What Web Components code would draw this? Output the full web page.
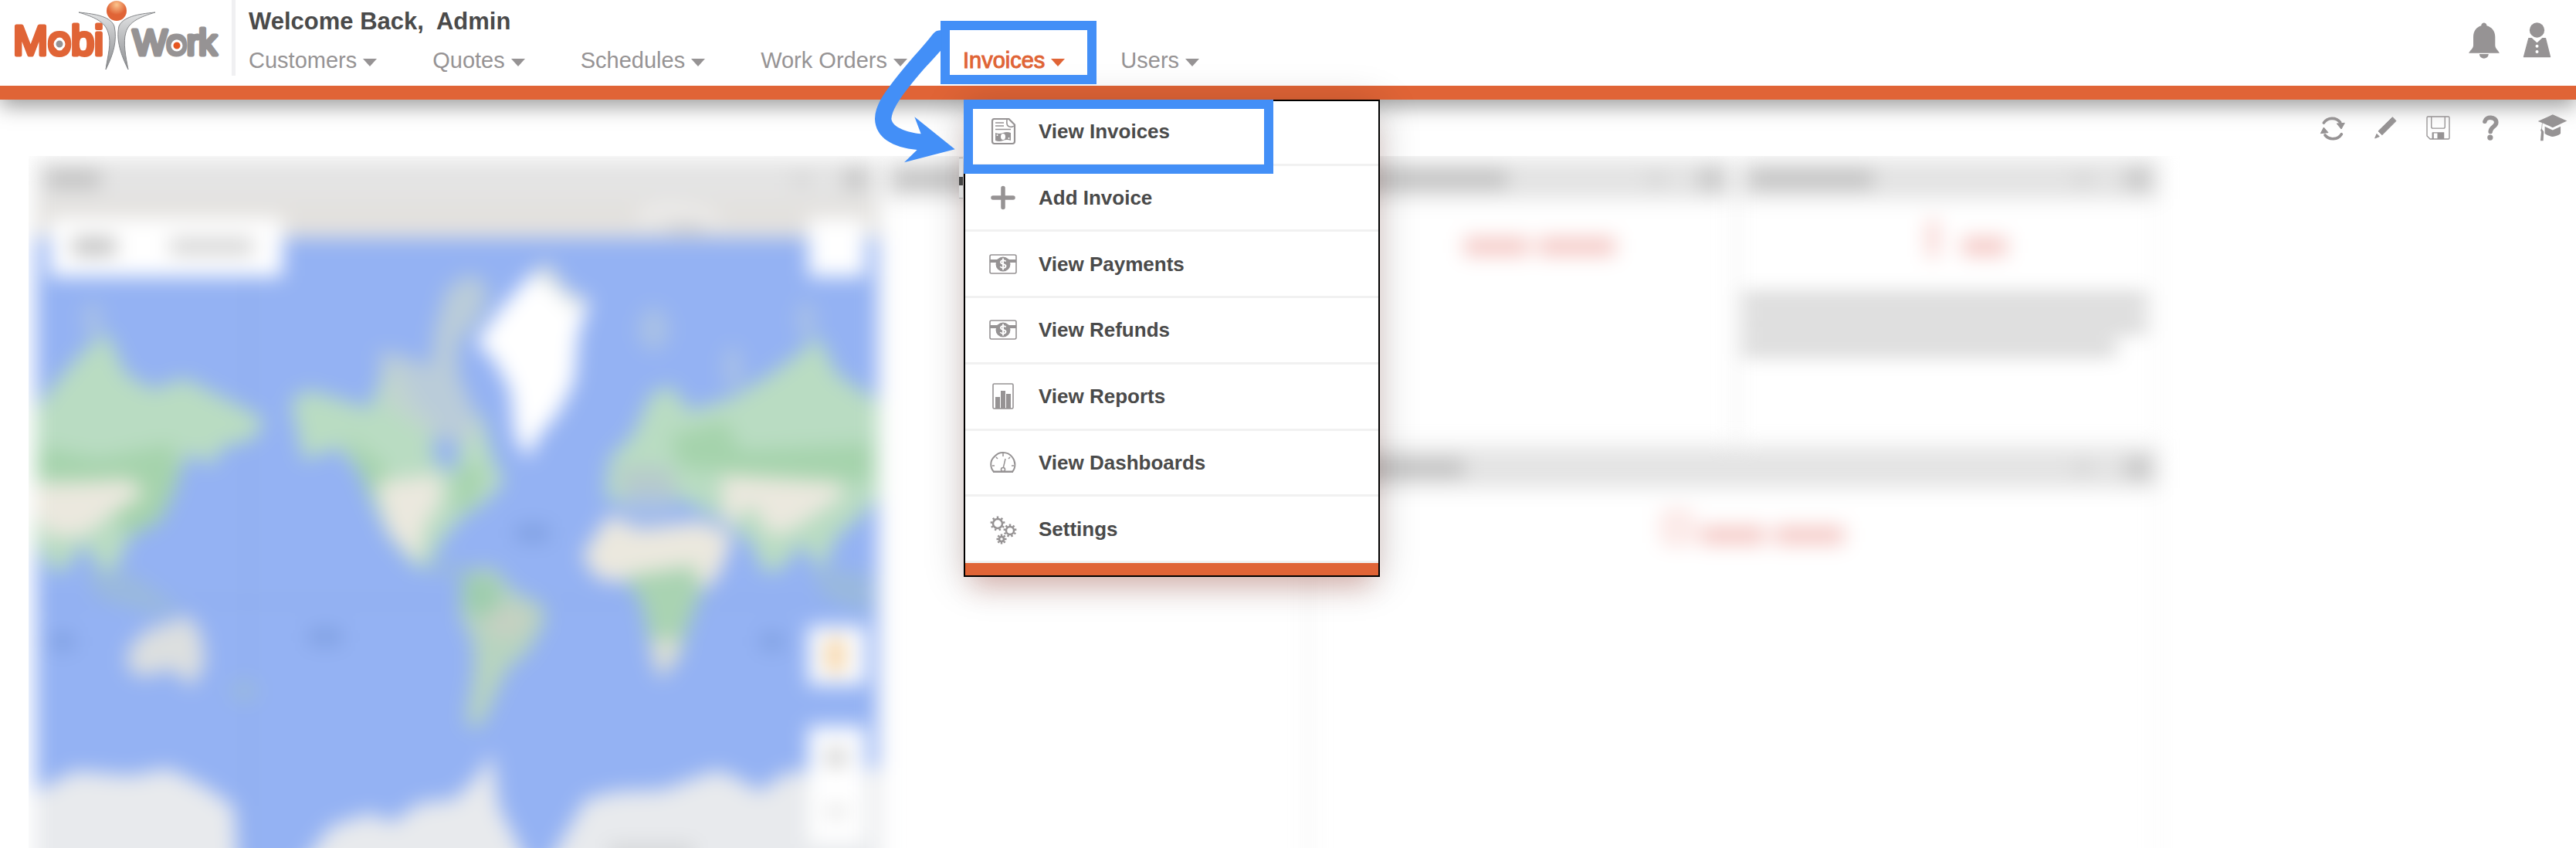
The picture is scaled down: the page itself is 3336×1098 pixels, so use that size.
<!DOCTYPE html>
<html lang="en">
<head>
<meta charset="utf-8">
<title>MobiWork</title>
<style>
    html, body {
        margin: 0;
        height: 100%;
    }
    body {
        font-family: "Liberation Sans", Arial, sans-serif;
        color: #4a4a4a;
        background: #fff;
        --orange: #e06436;
        --gray: #969394;
        --blue: #438ff7;
    }
</style>
</head>
<body>
<mw-app></mw-app>

<script>
// base: clones a template made of style + html into the shadow root
class MwElement extends HTMLElement {
    constructor() {
        super();
        this.attachShadow({ mode: "open" });
    }

    getStyle() {
        return "";
    }

    getTemplate() {
        return "<slot></slot>";
    }

    render() {
        const template = document.createElement("template");
        template.innerHTML = `<style>${this.getStyle()}</style>${this.getTemplate()}`;
        this.shadowRoot.replaceChildren(template.content.cloneNode(true));
    }

    connectedCallback() {
        this.render();
    }
}

// one gear: ring + teeth
function gear(cx, cy, r, teeth) {
    let out = `<circle cx="${cx}" cy="${cy}" r="${r}" fill="none" stroke-width="2.500"/>`;
    for (let i = 0; i < teeth; i++) {
        const a = (360 / teeth) * i;
        out += `<path transform="rotate(${a} ${cx} ${cy})" stroke-width="2.500" d="M${cx} ${cy - r - 1}v-2.500"/>`;
    }
    return out;
}

const MONEY = `<rect x="3" y="8" width="34" height="24" rx="2" fill="none" stroke-width="1.6"/>
    <path stroke="none" d="M3 14h34v4H3z"/><circle cx="20" cy="20" r="9.5" stroke="none"/>
    <path d="M23.5 16.5c-1-2-6.500-2-6.500 1s6.500 2 6.500 5-6 3-7 .5M20 12.500v15" fill="none" stroke="#fff" stroke-width="1.9"/>`;

// name: [viewBox, width, height, shapes]
const ICONS = {
    bell: ["650 28 121 143", 40, 47, `<path stroke="none" d="M699 41C681 46 668 62 668 85V118C668 132 655 138 650 149H771C766 138 754 132 754 118V85C754 62 740 46 721 41C720 26 700 26 699 41ZM692 153H728C727 176 693 176 692 153Z"/>`],
    person: ["860 30 110 138", 37, 46, `<circle cx="915" cy="60" r="29" stroke="none"/><path stroke-width="4" stroke-linejoin="round" d="M883 92H894L915 112L936 92H948L966 164H864Z"/><g fill="#fff" stroke="none"><circle cx="915" cy="122" r="6"/><circle cx="915" cy="144" r="6"/></g>`],
    refresh: ["72 384 102 102", 34, 34, `<g fill="none" stroke-width="11" stroke-linecap="round"><path d="M88 414A40 40 0 0 1 152 412"/><path d="M157 458A40 40 0 0 1 93 462"/></g><path stroke-width="3" stroke-linejoin="round" d="M139 417L169 415L156 438ZM76 455L88 432L105 452Z"/>`],
    pencil: ["281 388 92 94", 31, 31, `<path stroke-width="3" stroke-linejoin="round" d="M354 393L368 408L313 463L298 448ZM292 459L302 469L285 476Z"/>`],
    save: ["485 388 92 92", 31, 31, `<g fill="none" stroke-width="4"><path d="M488 395q0-4 4-4H570q4 0 4 4V473q0 4-4 4H500L488 465Z"/><path d="M505 391V430q0 6 6 6H551q6 0 6-6V391"/><path d="M510 477V453H552V477"/></g><path stroke="none" d="M528 453H552V477H528Z"/><path stroke="none" d="M508 453h6v24h-6z"/>`],
    help: ["704 384 68 100", 23, 33, `<path fill="none" stroke-width="17" stroke-linecap="round" d="M715 409C719 388 760 389 760 413C760 430 737 430 737 449"/><circle cx="736" cy="472" r="11" stroke="none"/>`],
    school: ["918 382 118 106", 39, 35, `<path stroke="none" d="M978 383L1034 408L978 434L938 416L936 440L943 450L941 486H930L933 450Q928 444 934 438L936 415L920 409Z"/><path stroke="none" d="M947 430L978 444L1009 430V458Q978 481 947 458Z"/>`],
    invoice: ["0 0 40 40", 40, 40, `<path fill="none" stroke-width="2.200" stroke-linejoin="round" d="M8.500 4h19l7.500 7.500V33q0 3-3 3H9q-3 0-3-3V7q0-3 2.500-3z"/><path fill="none" stroke-width="1.600" d="M25 5q-1 8 3 9t6-1M10 9h11M10 13h11M10 17.500h20"/><path stroke="none" d="M10 22q5 2 10 0t10 0v10q-5-2-10 0t-10 0z"/><ellipse cx="20" cy="27" rx="3" ry="4" fill="#fff" stroke="none"/><g fill="#fff" stroke="none"><circle cx="12.500" cy="25" r="1"/><circle cx="27.500" cy="29" r="1"/></g>`],
    plus: ["0 0 40 40", 40, 40, `<path fill="none" stroke-width="5.500" stroke-linecap="round" d="M20 7.500v25M7 20h26"/>`],
    money: ["0 0 40 40", 40, 40, MONEY],
    chart: ["0 0 40 40", 40, 40, `<rect x="7" y="4" width="26" height="32" rx="1.500" fill="none" stroke-width="1.600"/><path stroke="none" d="M10 21h6v15h-6zM17 13h6v23h-6zM24 17h6v19h-6z"/>`],
    gauge: ["0 0 40 40", 40, 40, `<path fill="none" stroke-width="2" stroke-linejoin="round" d="M8 32C3 26 3 18 8 13S15 7 20 7s8 1 12 6 5 13 0 19z"/><path fill="none" stroke-width="1.500" d="M20 8v4M11 13l2 2M29 13l-2 2M6 24h3M34 24h-3M23 15l-3 13"/><circle cx="20" cy="29" r="2.500" fill="#fff" stroke-width="1.600"/><path stroke="none" d="M7 30.500h26v2.500H7z"/>`],
    gears: ["0 0 40 40", 40, 40, gear(13, 13, 6, 9) + gear(29, 22, 5, 9) + gear(18, 33, 3, 8)]
};

class MwIcon extends MwElement {
    getStyle() {
        return `
        :host { display: block; }
        svg { display: block; fill: var(--gray); stroke: var(--gray); }
        `;
    }

    getTemplate() {
        const [box, w, h, shapes] = ICONS[this.getAttribute("name")];
        return `<svg viewBox="${box}" width="${w}" height="${h}" aria-hidden="true">${shapes}</svg>`;
    }
}

class MwLogo extends MwElement {
    getStyle() {
        return `
        :host { display: block; }
        svg { display: block; }
        text { font-family: "Liberation Sans", Arial, sans-serif; stroke-width: 5px; stroke-linejoin: round; stroke-linecap: round; }
        `;
    }

    getTemplate() {
        return `
        <svg width="300" height="98" viewBox="0 0 300 98" role="img" aria-label="MobiWork">
            <defs>
                <linearGradient id="arm" x1="0" y1="0" x2="0" y2="1">
                    <stop offset="0" stop-color="#e2e3e4"/><stop offset="1" stop-color="#8a8c8f"/>
                </linearGradient>
                <radialGradient id="head" cx="0.5" cy="0.2" r="0.5">
                    <stop offset="0" stop-color="#fbc58e"/><stop offset="1" stop-color="#e06436"/>
                </radialGradient>
            </defs>
            <text x="17" y="71" font-size="54" fill="#e06436" stroke="#e06436">Mobi</text>
            <text x="172" y="71" font-size="47" fill="#969394" stroke="#969394">Work</text>
            <circle cx="77" cy="57" r="6" fill="#969394" stroke="#fff" stroke-width="3"/>
            <circle cx="229" cy="59" r="6" fill="#e6551f" stroke="#fff" stroke-width="3"/>
            <g fill="url(#arm)" stroke="#85878a" stroke-width="1">
                <path d="M102 16C125 18 144 22 148 34C152 52 147 70 137 90C139 74 145 55 140 42C136 28 122 22 102 16Z"/>
                <path d="M201 16C178 18 159 22 154 34C150 52 157 72 166 90C163 74 159 55 163 42C167 28 181 22 201 16Z"/>
            </g>
            <circle cx="151" cy="14" r="13" fill="url(#head)"/>
        </svg>`;
    }
}

class MwHeader extends MwElement {
    getStyle() {
        return `
        :host {
            display: flex;
            position: relative;
            z-index: 2;
            height: 111px;
            background: #fff;
            border-bottom: 18px solid var(--orange);
            box-shadow: 0 8px 26px rgba(0, 0, 0, 0.4);
        }
        .rule { width: 5px; height: 98px; background: #f0f0f2; }
        .main { flex: 1; padding: 10px 0 0 17px; }
        h1 { margin: 0 0 16px; font-size: 31px; line-height: 36px; white-space: pre; }
        nav { display: flex; gap: 72px; }
        .tools { display: flex; gap: 28px; padding: 29px 31px 0 0; }
        button {
            display: flex;
            justify-content: center;
            width: 40px;
            height: 48px;
            padding: 0;
            border: 0;
            background: none;
        }
        `;
    }

    getTemplate() {
        return `
        <mw-logo></mw-logo>
        <div class="rule"></div>
        <div class="main">
            <h1>Welcome Back,  Admin</h1>
            <nav><slot></slot></nav>
        </div>
        <div class="tools">
            <button aria-label="Notifications"><mw-icon name="bell"></mw-icon></button>
            <button aria-label="Profile"><mw-icon name="person"></mw-icon></button>
        </div>`;
    }
}

class MwNavItem extends MwElement {
    getStyle() {
        return `
        :host { display: block; position: relative; color: var(--gray); }
        :host([active]) { color: var(--orange); }
        :host([active]) button { -webkit-text-stroke: 1px var(--orange); }
        button {
            display: flex;
            align-items: center;
            gap: 8px;
            padding: 0;
            border: 0;
            background: none;
            color: inherit;
            font: inherit;
            font-size: 29px;
            line-height: 33px;
            white-space: nowrap;
        }
        svg { display: block; margin-top: 4px; fill: currentColor; }
        `;
    }

    getTemplate() {
        return `
        <button aria-haspopup="true">${this.getAttribute("label")}
            <svg width="18" height="10" viewBox="0 0 18 10" aria-hidden="true"><path d="M0 0h18L9 10z"/></svg>
        </button>
        <slot></slot>`;
    }
}

class MwMenu extends MwElement {
    getStyle() {
        return `
        :host {
            display: block;
            position: absolute;
            top: 67px;
            left: 1px;
            width: 539px;
            background: #fff;
            border-bottom: 18px solid var(--orange);
            box-shadow: 0 24px 32px -12px rgba(200, 60, 40, 0.25), 0 6px 50px rgba(0, 0, 0, 0.2);
        }
        .list { display: grid; grid-auto-rows: 1fr; height: 600px; }
        .frame {
            position: absolute;
            inset: 0 0 -18px;
            border: 2px solid #000;
            pointer-events: none;
        }
        .sliver {
            position: absolute;
            top: 75px;
            left: -6px;
            width: 5px;
            height: 51px;
            background: linear-gradient(#dcdcdc 24px, #444 24px, #444 35px, #dcdcdc 35px);
            border-top: 1px solid #aaa;
            border-bottom: 1px solid #aaa;
        }
        `;
    }

    getTemplate() {
        return `<div class="sliver"></div><div class="frame"></div><div class="list"><slot></slot></div>`;
    }
}

class MwMenuItem extends MwElement {
    getStyle() {
        return `
        :host { display: grid; margin: 0 2px; border-bottom: 3px solid #f1f1f1; }
        a {
            display: flex;
            align-items: center;
            gap: 26px;
            padding-left: 29px;
            color: #4a4a4a;
            font-size: 26px;
            font-weight: bold;
            line-height: 30px;
            text-decoration: none;
        }
        `;
    }

    getTemplate() {
        return `
        <a href="#"><mw-icon name="${this.getAttribute("icon")}"></mw-icon>${this.getAttribute("label")}</a>
        <slot></slot>`;
    }
}

// blue frame drawn over a nav or menu entry
class MwCallout extends MwElement {
    getStyle() {
        return `
        :host {
            display: block;
            position: absolute;
            z-index: 1;
            box-sizing: border-box;
            border: 12px solid var(--blue);
            pointer-events: none;
        }
        :host([kind="tab"]) { top: -35px; left: -29px; width: 202px; height: 82px; }
        :host([kind="row"]) { top: 0; left: 0; width: 401px; height: 96px; }
        svg { position: absolute; top: -1px; left: -99px; fill: var(--blue); }
        `;
    }

    getTemplate() {
        if (this.getAttribute("kind") !== "tab") {
            return "";
        }
        return `
        <svg width="108" height="174" viewBox="90 84 324 522" aria-hidden="true">
            <path d="M356 88C338 88 330 92 321 103C280 155 220 218 170 283C130 335 97 380 96 432C98 505 165 543 260 552L210 601L407 550L250 424L275 490C220 484 165 465 160 432C162 398 190 355 240 293C280 243 315 208 356 162Z"/>
        </svg>`;
    }
}

class MwToolbar extends MwElement {
    getStyle() {
        return `
        :host {
            display: flex;
            justify-content: flex-end;
            align-items: center;
            gap: 28px;
            height: 73px;
            padding-right: 11px;
            position: relative;
            z-index: 3;
            pointer-events: none;
        }
        button {
            display: flex;
            justify-content: center;
            align-items: center;
            width: 40px;
            height: 40px;
            padding: 0;
            border: 0;
            background: none;
            pointer-events: auto;
        }
        button:last-child { margin-left: 12px; }
        `;
    }

    getTemplate() {
        return `
        <button aria-label="Refresh"><mw-icon name="refresh"></mw-icon></button>
        <button aria-label="Edit"><mw-icon name="pencil"></mw-icon></button>
        <button aria-label="Save"><mw-icon name="save"></mw-icon></button>
        <button aria-label="Help"><mw-icon name="help"></mw-icon></button>
        <button aria-label="Training"><mw-icon name="school"></mw-icon></button>`;
    }
}

// dashboard widget: gray bar with a title smudge and two window buttons
class MwPanel extends MwElement {
    getStyle() {
        return `
        :host { display: flex; flex-direction: column; background: #fff; }
        header {
            display: flex;
            align-items: center;
            gap: 44px;
            height: 52px;
            padding: 0 14px;
            background: #e4e4e4;
        }
        .title { height: 20px; margin-right: auto; background: #bcbcbc; }
        .min { width: 22px; height: 12px; background: #cfcfcf; }
        .close { width: 30px; height: 26px; background: #c4c4c4; }
        .body { flex: 1; border: solid #f3f3f3; border-width: 0 4px 4px; }
        :host([flush]) .body { border: 0; }
        `;
    }

    getTemplate() {
        return `
        <header>
            <div class="title" style="width: ${this.getAttribute("title-width")}px"></div>
            <div class="min"></div>
            <div class="close"></div>
        </header>
        <div class="body"><slot></slot></div>`;
    }
}

class MwMap extends MwElement {
    getStyle() {
        return `
        :host { display: block; }
        svg { display: block; width: 100%; }
        `;
    }

    getTemplate() {
        return `
        <svg viewBox="48 254 1090 870" preserveAspectRatio="xMidYMin slice" aria-hidden="true">
            <rect x="48" y="254" width="1090" height="870" fill="#94b2f3"/>
            <rect x="48" y="254" width="1090" height="50" fill="#e3e1de"/>
            <path d="M323 306V1124M48 775H1138" stroke="#8dabe9" stroke-width="4"/>
            <g fill="#b9dcc2">
                <path d="M48 525L75 490L110 450L140 425L165 480L200 500L240 485L280 505L320 525L345 540L330 565L290 575L275 600L250 582L237 600L225 640L200 675L170 690L150 735L135 735L110 700L85 735L70 735L48 700Z"/>
                <path d="M378 515L400 500L450 515L480 525L500 470L520 480L540 520L565 545L562 590L590 610L600 555L625 530L640 590L655 620L625 650L600 665L570 700L555 735L535 725L505 690L485 650L470 610L440 575L395 592Z"/>
                <path d="M785 640L790 590L820 560L845 505L870 495L895 528L950 510L1000 480L1040 450L1060 430L1085 480L1138 515V640L1110 670L1085 690L1065 735L1040 700L1010 735L990 735L975 700L940 670L880 640L830 650Z"/>
            </g>
            <g fill="#a5d3ac">
                <path d="M55 575L130 590L225 570L235 610L210 670L170 690L110 620L50 615Z"/>
                <path d="M450 560L500 600L510 640L480 640L465 600Z"/>
                <path d="M870 560L940 540L960 580L1130 570V620L950 610L880 600Z"/>
                <path d="M595 600L630 600L615 650L590 660Z"/>
            </g>
            <g fill="#ebe8de">
                <path d="M48 622L170 616L190 635L150 660L110 690L65 690L48 660Z"/>
                <path d="M488 620L570 610L575 640L550 680L545 725L505 685Z"/>
                <path d="M935 610L1090 620L1090 640L1030 680L1000 690L975 650L940 680Z"/>
                <path d="M755 715L790 662L830 680L910 670L950 690L935 735L915 760L890 745L815 750L775 745Z"/>
                <path d="M838 800L880 800L885 840L858 875L848 855Z"/>
                <path d="M167 838L190 812L225 800L245 792L262 815L268 855L250 885L225 862L185 872L168 862Z" fill="#dcdfdf"/>
            </g>
            <path d="M810 742L900 728L910 760L895 800L880 845L845 835L832 775Z" fill="#a9d3b2"/>
            <path d="M842 825L882 820L878 850L858 872L848 855Z" fill="#dcdfd4"/>
            <path d="M800 600L870 600L880 640L860 640L810 640Z" fill="#b7cbcb"/>
            <path d="M600 735L640 730L665 760L705 780L707 800L685 840L660 860L645 890L630 925L620 940L605 930L615 870L615 830L598 790Z" fill="#b7d4bf"/>
            <path d="M600 740L645 745L650 780L630 795L603 785Z" fill="#9dcdad"/>
            <path d="M640 780L690 785L685 810L650 825L628 805Z" fill="#c6d0c2"/>
            <path d="M560 470L565 420L580 370L610 350L635 368L625 405L595 440L595 480L630 560L600 570L560 560L500 520L492 450L520 455Z" fill="#c3d2d2" opacity="0.8"/>
            <path d="M618 440L650 395L690 350L710 335L735 370L765 385L750 430L745 490L725 530L700 560L685 590L668 560L662 500L640 460Z" fill="#fff"/>
            <path d="M690 350L710 335L735 370L760 385L750 400L720 370Z" fill="#d8dfdf"/>
            <g fill="#a9c1e5">
                <ellipse cx="848" cy="422" rx="20" ry="28"/>
                <ellipse cx="950" cy="472" rx="12" ry="28"/>
                <ellipse cx="122" cy="410" rx="12" ry="24"/>
                <ellipse cx="1045" cy="410" rx="12" ry="24"/>
                <ellipse cx="840" cy="650" rx="40" ry="14"/>
            </g>
            <g fill="#9ab9dd">
                <path d="M110 730L175 740L240 785L200 790L130 770ZM1050 730L1130 740V790L1070 770ZM550 720L620 730L600 745L560 735Z"/>
                <ellipse cx="318" cy="890" rx="18" ry="14"/>
            </g>
            <g fill="#7e9ee0">
                <rect x="670" y="676" width="42" height="20"/>
                <rect x="402" y="810" width="42" height="20"/>
                <rect x="68" y="816" width="30" height="20"/>
                <rect x="986" y="816" width="30" height="20"/>
            </g>
            <g fill="#e8eaed">
                <path d="M48 1020L100 993L170 1000L220 990L270 1015L305 1040L310 1124H48Z"/>
                <path d="M385 1124L430 1065L480 1048L510 1060L545 1035L590 1030L620 1000L638 970L648 1040L690 1124Z"/>
                <path d="M705 1124L760 1030L800 1020L860 1018L930 992L960 1005L985 1020L1020 995L1138 990V1124Z"/>
            </g>
            <rect x="790" y="1090" width="110" height="20" fill="#d2d4d6"/>
            <path d="M830 282Q840 266 880 270T930 282" fill="none" stroke="#f6f6f6" stroke-width="10"/>
            <rect x="870" y="286" width="44" height="12" fill="#ccc"/>
            <g fill="#fff">
                <rect x="66" y="278" width="302" height="76"/>
                <rect x="1048" y="278" width="74" height="76"/>
                <rect x="1048" y="806" width="74" height="76"/>
                <rect x="1048" y="936" width="74" height="152"/>
            </g>
            <g fill="#bdbdbd">
                <rect x="96" y="304" width="56" height="22"/>
                <rect x="222" y="304" width="108" height="22" fill="#d4d4d4"/>
                <rect x="1072" y="964" width="24" height="24" fill="#ccc"/>
                <rect x="1072" y="1040" width="24" height="12" fill="#d8d8d8"/>
            </g>
            <rect x="1072" y="822" width="22" height="44" fill="#f3cf9c"/>
        </svg>`;
    }
}

class MwDashboard extends MwElement {
    getStyle() {
        return `
        :host { display: block; flex: 1; min-height: 0; margin: 0 37px; overflow: hidden; }
        .board {
            display: grid;
            grid-template-columns: 1092fr 546fr 546fr 546fr 494fr;
            grid-template-rows: 370px 560px;
            gap: 4px 8px;
            padding: 4px 0 0 9px;
            filter: blur(13px);
        }
        .map, .side { grid-row: span 2; }
        .wide { grid-column: 3 / span 2; }
        .note { display: flex; justify-content: center; align-items: center; gap: 12px; height: 122px; padding-left: 46px; }
        .note i { height: 22px; background: #f4c4c0; }
        .note .mark { width: 12px; height: 48px; margin: 0 20px 20px 0; background: #f6c6c2; }
        .note .box { width: 20px; height: 24px; margin-bottom: 20px; border: 8px solid #f8ceca; background: none; }
        .lines { display: grid; gap: 10px; padding-right: 12px; }
        .lines i { height: 20px; background: #cfcfcf; }
        .lines i:last-child { margin-right: 40px; }
        `;
    }

    getTemplate() {
        return `
        <div class="board">
            <mw-panel class="map" title-width="70" flush><mw-map></mw-map></mw-panel>
            <mw-panel class="side" title-width="110"></mw-panel>
            <mw-panel title-width="240">
                <div class="note"><i style="width: 84px"></i><i style="width: 100px"></i></div>
            </mw-panel>
            <mw-panel title-width="160">
                <div class="note"><i class="mark"></i><i style="width: 58px"></i></div>
                <div class="lines"><i></i><i></i><i></i></div>
            </mw-panel>
            <mw-panel class="wide" title-width="184">
                <div class="note"><i class="box"></i><i style="width: 84px"></i><i style="width: 90px"></i></div>
            </mw-panel>
        </div>`;
    }
}

class MwApp extends MwElement {
    getStyle() {
        return `
        :host { display: flex; flex-direction: column; height: 100vh; overflow: hidden; }
        `;
    }

    getTemplate() {
        return `
        <mw-header>
            <mw-nav-item label="Customers"></mw-nav-item>
            <mw-nav-item label="Quotes"></mw-nav-item>
            <mw-nav-item label="Schedules"></mw-nav-item>
            <mw-nav-item label="Work Orders"></mw-nav-item>
            <mw-nav-item label="Invoices" active>
                <mw-menu>
                    <mw-menu-item icon="invoice" label="View Invoices"><mw-callout kind="row"></mw-callout></mw-menu-item>
                    <mw-menu-item icon="plus" label="Add Invoice"></mw-menu-item>
                    <mw-menu-item icon="money" label="View Payments"></mw-menu-item>
                    <mw-menu-item icon="money" label="View Refunds"></mw-menu-item>
                    <mw-menu-item icon="chart" label="View Reports"></mw-menu-item>
                    <mw-menu-item icon="gauge" label="View Dashboards"></mw-menu-item>
                    <mw-menu-item icon="gears" label="Settings"></mw-menu-item>
                </mw-menu>
                <mw-callout kind="tab"></mw-callout>
            </mw-nav-item>
            <mw-nav-item label="Users"></mw-nav-item>
        </mw-header>
        <mw-toolbar></mw-toolbar>
        <mw-dashboard></mw-dashboard>`;
    }
}

customElements.define("mw-icon", MwIcon);
customElements.define("mw-logo", MwLogo);
customElements.define("mw-header", MwHeader);
customElements.define("mw-nav-item", MwNavItem);
customElements.define("mw-menu", MwMenu);
customElements.define("mw-menu-item", MwMenuItem);
customElements.define("mw-callout", MwCallout);
customElements.define("mw-toolbar", MwToolbar);
customElements.define("mw-panel", MwPanel);
customElements.define("mw-map", MwMap);
customElements.define("mw-dashboard", MwDashboard);
customElements.define("mw-app", MwApp);
</script>
</body>
</html>
